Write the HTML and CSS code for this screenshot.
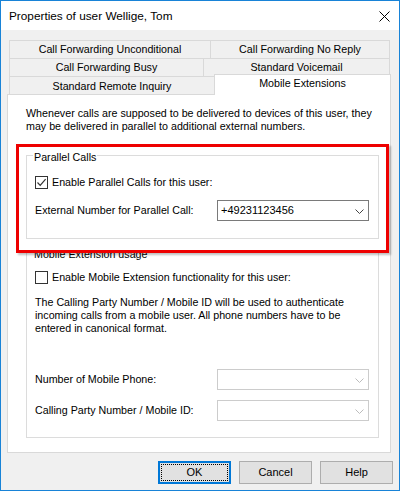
FILE: index.html
```html
<!DOCTYPE html>
<html>
<head>
<meta charset="utf-8">
<link rel="stylesheet" href="styles.css">
</head>
<body>
<div class="window">
  <div class="titlebar">
    <span class="title">Properties of user Wellige, Tom</span>
    <svg class="close" width="11" height="11" viewBox="0 0 11 11"><path d="M0.5 0.5 L10.5 10.5 M10.5 0.5 L0.5 10.5" stroke="#000" stroke-width="1" fill="none"/></svg>
  </div>
  <div class="client">
    <div class="tabs">
      <div class="tabrow">
        <div class="tab w1a">Call Forwarding Unconditional</div>
        <div class="tab w1b">Call Forwarding No Reply</div>
      </div>
      <div class="tabrow">
        <div class="tab w2a">Call Forwarding Busy</div>
        <div class="tab w2b">Standard Voicemail</div>
      </div>
      <div class="tabrow">
        <div class="tab w3a">Standard Remote Inquiry</div>
        <div class="tab w3b selected">Mobile Extensions</div>
      </div>
    </div>
    <div class="panel">
      <p class="desc">Whenever calls are supposed to be delivered to devices of this user, they<br>may be delivered in parallel to additional external numbers.</p>
      <div class="group group1">
        <div class="legend">Parallel Calls</div>
        <div class="checkrow first">
          <span class="checkbox"><svg width="11" height="11" viewBox="0 0 11 11"><path d="M1.5 5.5 L4.2 8.3 L9.6 2.2" stroke="#333" stroke-width="1.2" fill="none"/></svg></span>
          <span>Enable Parallel Calls for this user:</span>
        </div>
        <div class="fieldrow r1">
          <span class="flabel">External Number for Parallel Call:</span>
          <div class="combo">
            <span class="cval">+49231123456</span>
            <svg class="chev" width="9" height="5" viewBox="0 0 9 5"><path d="M0.5 0.5 L4.5 4.5 L8.5 0.5" stroke="#444" stroke-width="1" fill="none"/></svg>
          </div>
        </div>
      </div>
      <div class="group group2">
        <div class="legend">Mobile Extension usage</div>
        <div class="checkrow second">
          <span class="checkbox"></span>
          <span>Enable Mobile Extension functionality for this user:</span>
        </div>
        <p class="info">The Calling Party Number / Mobile ID will be used to authenticate<br>incoming calls from a mobile user. All phone numbers have to be<br>entered in canonical format.</p>
        <div class="fieldrow r2">
          <span class="flabel">Number of Mobile Phone:</span>
          <div class="combo disabled">
            <span class="cval"></span>
            <svg class="chev" width="9" height="5" viewBox="0 0 9 5"><path d="M0.5 0.5 L4.5 4.5 L8.5 0.5" stroke="#bcbcbc" stroke-width="1" fill="none"/></svg>
          </div>
        </div>
        <div class="fieldrow r3">
          <span class="flabel">Calling Party Number / Mobile ID:</span>
          <div class="combo disabled">
            <span class="cval"></span>
            <svg class="chev" width="9" height="5" viewBox="0 0 9 5"><path d="M0.5 0.5 L4.5 4.5 L8.5 0.5" stroke="#bcbcbc" stroke-width="1" fill="none"/></svg>
          </div>
        </div>
      </div>
    </div>
    <div class="buttons">
      <div class="btn default"><span class="focus">OK</span></div>
      <div class="btn">Cancel</div>
      <div class="btn">Help</div>
    </div>
  </div>
  <div class="highlight"></div>
</div>
</body>
</html>
```

FILE: styles.css
```css
html, body {
  margin: 0;
  padding: 0;
  background: #ffffff;
}

body {
  font-family: "Liberation Sans", Arial, sans-serif;
  font-size: 10.7px;
  line-height: 13px;
  color: #000;
}

.window {
  position: relative;
  width: 400px;
  height: 491px;
  box-sizing: border-box;
  border: 1px solid #1883d7;
  background: #f0f0f0;
  display: flex;
  flex-direction: column;
}

.titlebar {
  height: 29px;
  background: #ffffff;
  display: flex;
  align-items: center;
  justify-content: space-between;
  padding: 0 9px 0 8px;
}

.title {
  font-size: 11.8px;
  line-height: 16px;
  margin-top: 1px;
}

.close {
  display: block;
  margin-top: 1px;
}

.client {
  padding-top: 10px;
  display: flex;
  flex-direction: column;
}

.tabs {
  margin-left: 8px;
  display: flex;
  flex-direction: column;
}

.tabrow {
  display: flex;
  align-items: flex-start;
  height: 18px;
}

.tab {
  box-sizing: border-box;
  height: 18px;
  border: 1px solid #d9d9d9;
  border-bottom: none;
  background: #f0f0f0;
  text-align: center;
  line-height: 17px;
  white-space: nowrap;
}

.tab + .tab {
  margin-left: -1px;
}

.w1a { width: 202px; }
.w1b { width: 180px; }
.w2a { width: 195px; }
.w2b { width: 187px; }
.w3a { width: 206px; line-height: 19px; }
.w3b { width: 177px; }

.tab.selected {
  position: relative;
  z-index: 1;
  height: 21px;
  margin-top: -2px;
  margin-bottom: -1px;
  background: #ffffff;
  line-height: 17px;
}

.panel {
  margin-left: 6px;
  width: 384px;
  height: 359px;
  box-sizing: border-box;
  border: 1px solid #d9d9d9;
  background: #ffffff;
  display: flex;
  flex-direction: column;
  padding-left: 18px;
}

.desc {
  margin: 12px 0 0 0;
  white-space: nowrap;
}

.group {
  box-sizing: border-box;
  width: 353px;
  border: 1px solid #dcdcdc;
  display: flex;
  flex-direction: column;
}

.group1 {
  margin-top: 22px;
  height: 84px;
}

.group2 {
  margin-top: 13px;
  height: 186px;
}

.legend {
  align-self: flex-start;
  margin: -5px 0 0 6px;
  padding: 0 1px;
  background: #ffffff;
  white-space: nowrap;
}

.checkrow {
  display: flex;
  align-items: center;
  margin-left: 8px;
  height: 13px;
  white-space: nowrap;
}

.checkrow.first { margin-top: 12px; }
.checkrow.second { margin-top: 10px; }

.checkbox {
  width: 13px;
  height: 13px;
  box-sizing: border-box;
  border: 1px solid #333333;
  background: #ffffff;
  margin-right: 4px;
  display: flex;
  align-items: center;
  justify-content: center;
}

.checkbox svg {
  display: block;
}

.info {
  margin: 12px 0 0 8px;
  white-space: nowrap;
}

.fieldrow {
  display: flex;
  align-items: center;
  margin-left: 8px;
  white-space: nowrap;
}

.fieldrow.r1 { margin-top: 11px; }
.fieldrow.r2 { margin-top: 34px; }
.fieldrow.r3 { margin-top: 10px; }

.flabel {
  width: 182px;
}

.combo {
  box-sizing: border-box;
  width: 152px;
  height: 21px;
  border: 1px solid #7a7a7a;
  background: #ffffff;
  display: flex;
  align-items: center;
  justify-content: space-between;
  padding: 0 4px 0 3px;
  font-size: 11px;
}

.combo.disabled {
  border-color: #cccccc;
}

.chev {
  display: block;
  margin-top: 1px;
}

.buttons {
  display: flex;
  justify-content: flex-end;
  gap: 8px;
  margin-top: 8px;
  padding-right: 6px;
  font-size: 11px;
}

.btn {
  box-sizing: border-box;
  width: 73px;
  height: 23px;
  border: 1px solid #adadad;
  background: #e1e1e1;
  display: flex;
  align-items: center;
  justify-content: center;
}

.btn.default {
  border: 2px solid #0078d7;
  padding: 1px;
}

.btn .focus {
  flex: 1;
  align-self: stretch;
  border: 1px dotted #000;
  display: flex;
  align-items: center;
  justify-content: center;
}

.highlight {
  position: absolute;
  left: 15px;
  top: 143px;
  width: 373px;
  height: 109px;
  box-sizing: border-box;
  border: 3px solid #ee0000;
  box-shadow: 2px 2px 2px rgba(0, 0, 0, 0.25);
  pointer-events: none;
}
```
